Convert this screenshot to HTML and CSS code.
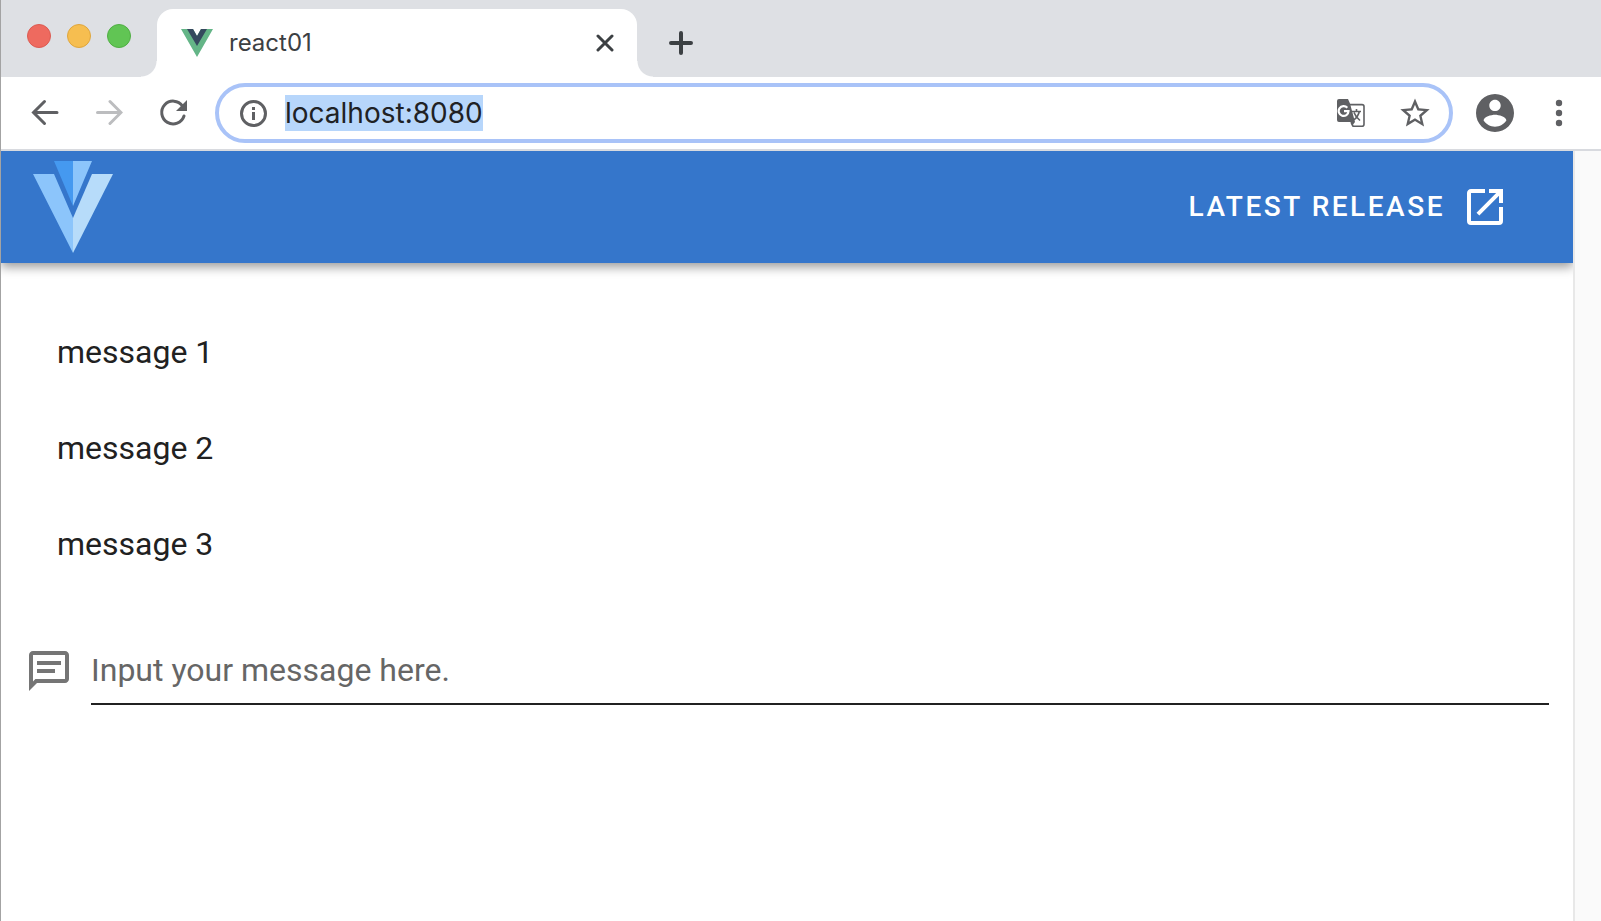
FILE: index.html
```html
<!DOCTYPE html>
<html lang="en">
<head>
<meta charset="utf-8">
<title>react01</title>
<link rel="stylesheet" href="styles.css">
</head>
<body>
<div class="window">
  <header class="tabstrip">
    <div class="lights">
      <button class="light light-red" aria-label="Close window"></button>
      <button class="light light-yellow" aria-label="Minimize window"></button>
      <button class="light light-green" aria-label="Zoom window"></button>
    </div>
    <div class="tab">
      <svg class="favicon" viewBox="0 0 32 28" aria-hidden="true"><path fill="#64b587" d="M0 0h12l4 7 4-7h12L16 28z"/><path fill="#35495e" d="M6 0h6l4 7 4-7h6L16 17z"/></svg>
      <span class="tab-title">react01</span>
      <button class="tab-close" aria-label="Close tab"><svg width="18" height="18" viewBox="0 0 18 18"><path class="line" d="M2 2l14 14M16 2L2 16"/></svg></button>
    </div>
    <button class="tab-new" aria-label="New tab"><svg width="24" height="24" viewBox="0 0 24 24"><path class="line line-bold" d="M12 2v20M2 12h20"/></svg></button>
  </header>

  <nav class="toolbar">
    <div class="nav-buttons">
      <button class="tool" aria-label="Back"><svg width="28" height="28" viewBox="0 0 28 28"><path class="line" d="M26 13.500H3M13.500 2.500l-11 11 11 11"/></svg></button>
      <button class="tool tool-off" aria-label="Forward"><svg width="28" height="28" viewBox="0 0 28 28"><path class="line" d="M2.500 13.500h23M15 2.500l11 11-11 11"/></svg></button>
      <button class="tool" aria-label="Reload"><svg width="28" height="28" viewBox="0 0 28 28"><path class="line" d="M23.500 7A11.400 11.400 0 1 0 25 17"/><path fill="currentColor" d="M28 1v11H17z"/></svg></button>
    </div>
    <div class="omnibox">
      <svg class="info" viewBox="0 0 28 28" aria-hidden="true"><circle cx="14.500" cy="14.500" r="12" fill="none" stroke="currentColor" stroke-width="3"/><path fill="currentColor" d="M13 8h3v3h-3zM13 13h3v8h-3z"/></svg>
      <input class="url" id="url" type="text" value="localhost:8080" aria-label="Address" spellcheck="false">
      <div class="omni-actions">
        <button class="tool" aria-label="Translate"><svg width="28" height="28" viewBox="0 0 28 28"><path fill="none" stroke="currentColor" stroke-width="1.600" d="M13 5.600h12a2 2 0 0 1 2 2v17.600a2 2 0 0 1-2 2H16l-2-4"/><path fill="currentColor" d="M2 0h9l2 4.500 5 18.500H2a2 2 0 0 1-2-2V2a2 2 0 0 1 2-2zM14 23h4l-3 4z"/><path fill="none" stroke="#fff" stroke-width="2.200" d="M10.300 8.800A4.900 4.900 0 1 0 11.500 12.200H7"/><path fill="none" stroke="currentColor" stroke-width="1.600" d="M15 12.500h9M19.500 10v2.500M22.300 12.500c-.8 4-3 6.500-5.500 8.500M17 13.500c1 3 3 5.500 6 8"/></svg></button>
        <button class="tool" aria-label="Bookmark"><svg width="32" height="32" viewBox="1.100 .900 21.800 21.800"><path fill="currentColor" d="M22 9.240l-7.190-.62L12 2 9.190 8.630 2 9.240l5.460 4.730L5.820 21 12 17.270 18.180 21l-1.630-7.030L22 9.240zM12 15.400l-3.760 2.270 1-4.280-3.320-2.880 4.380-.38L12 6.100l1.710 4.040 4.380.38-3.320 2.880 1 4.280L12 15.400z"/></svg></button>
      </div>
    </div>
    <div class="nav-buttons">
      <button class="tool" aria-label="Profile"><svg width="38" height="38" viewBox="2 2 20 20"><path fill="currentColor" d="M12 2C6.480 2 2 6.480 2 12s4.480 10 10 10 10-4.480 10-10S17.520 2 12 2zm0 3c1.660 0 3 1.340 3 3s-1.340 3-3 3-3-1.340-3-3 1.340-3 3-3zm0 14.200c-2.500 0-4.710-1.280-6-3.220.03-1.990 4-3.080 6-3.080 1.990 0 5.970 1.090 6 3.080-1.290 1.940-3.500 3.220-6 3.220z"/></svg></button>
      <button class="tool" aria-label="Menu"><svg width="8" height="28" viewBox="0 0 8 28" fill="currentColor"><circle cx="4" cy="4" r="3.200"/><circle cx="4" cy="14" r="3.200"/><circle cx="4" cy="24" r="3.200"/></svg></button>
    </div>
  </nav>

  <div class="viewport">
    <div class="page">
      <header class="appbar">
        <svg class="logo" viewBox="0 0 80 92" role="img" aria-label="Vuetify"><path fill="#4599f0" d="M21 0h19v45z"/><path fill="#8cc5fb" d="M40 0h19L40 45zM0 13h21l19 44v35z"/><path fill="#b7dcfa" d="M80 13H59L40 57v35z"/></svg>
        <a class="release" href="#">
          <span>Latest Release</span>
          <svg width="48" height="48" viewBox="0 0 24 24" aria-hidden="true"><path fill="currentColor" d="M14,3V5H17.590L7.760,14.830L9.170,16.240L19,6.410V10H21V3M19,19H5V5H12V3H5C3.890,3 3,3.900 3,5V19A2,2 0 0,0 5,21H19A2,2 0 0,0 21,19V12H19V19Z"/></svg>
        </a>
      </header>
      <main class="content">
        <ul class="messages">
          <li class="message">message 1</li>
          <li class="message">message 2</li>
          <li class="message">message 3</li>
        </ul>
        <div class="compose">
          <label class="compose-icon" for="message" aria-label="Message"><svg width="48" height="48" viewBox="0 0 24 24"><path fill="currentColor" d="M20 2H4C2.900 2 2 2.900 2 4V22L6 18H20C21.100 18 22 17.100 22 16V4C22 2.900 21.100 2 20 2M20 16H5.200L4 17.200V4H20V16M6 7H18V9H6V7M6 11H15V13H6V11Z"/></svg></label>
          <input class="compose-input" id="message" type="text" placeholder="Input your message here.">
        </div>
      </main>
    </div>
    <div class="gutter"></div>
  </div>
</div>
<script>
  const url = document.getElementById("url");
  url.focus();
  url.select();
</script>
</body>
</html>
```
FILE: styles.css
```css
* { box-sizing: border-box; }

body {
  margin: 0;
  background: #fff;
  font-family: Roboto, "Liberation Sans", sans-serif;
  color: #212121;
}

button {
  display: flex;
  align-items: center;
  justify-content: center;
  padding: 0;
  border: 0;
  background: none;
  color: inherit;
}

svg { display: block; flex: none; }

.line {
  fill: none;
  stroke: currentColor;
  stroke-width: 3;
  stroke-linecap: round;
}
.line-bold { stroke-width: 4; }

.window {
  display: flex;
  flex-direction: column;
  min-height: 100vh;
  border-left: 1px solid #a3a3a3;
}

/* Tab strip */
.tabstrip {
  display: flex;
  align-items: stretch;
  padding-top: 9px;
  background: #dee0e4;
  color: #3c4043;
}
.lights {
  display: flex;
  gap: 16px;
  width: 156px;
  padding: 15px 0 0 26px;
}
.light {
  width: 24px;
  height: 24px;
  border: 1px solid;
  border-radius: 50%;
}
.light-red { background: #ee6a5f; border-color: #dc5b52; }
.light-yellow { background: #f6be50; border-color: #dfa63d; }
.light-green { background: #61c554; border-color: #50ae43; }

.tab {
  position: relative;
  display: flex;
  align-items: center;
  width: 480px;
  height: 68px;
  padding: 0 16px 0 24px;
  border-radius: 16px 16px 0 0;
  background: #fff;
}
.tab::before,
.tab::after {
  content: "";
  position: absolute;
  bottom: 0;
  width: 16px;
  height: 16px;
}
.tab::before {
  right: 100%;
  background: radial-gradient(circle at 0 0, transparent 15px, #fff 16px);
}
.tab::after {
  left: 100%;
  background: radial-gradient(circle at 100% 0, transparent 15px, #fff 16px);
}
.favicon { width: 32px; height: 28px; }
.tab-title {
  flex: 1;
  padding-left: 16px;
  font: 24px/32px Inter, sans-serif;
}
.tab-close { width: 32px; height: 32px; }
.tab-new { width: 56px; margin-left: 16px; }

/* Toolbar */
.toolbar {
  display: flex;
  align-items: center;
  gap: 14px;
  padding: 6px 14px 6px 16px;
  border-bottom: 2px solid #d8dadf;
  color: #5f6063;
}
.nav-buttons,
.omni-actions {
  display: flex;
  gap: 8px;
}
.tool { width: 56px; height: 48px; }
.tool-off { color: #bcbdbf; }
.omnibox {
  display: flex;
  flex: 1;
  align-items: center;
  height: 60px;
  padding: 0 6px 0 20px;
  border: 4px solid #a9c3f8;
  border-radius: 30px;
}
.info { width: 28px; height: 28px; }
.url {
  flex: 1;
  min-width: 0;
  margin-left: 18px;
  padding: 0;
  border: 0;
  outline: 0;
  background: none;
  font: 28px/36px Inter, sans-serif;
  color: #202124;
}
.url::selection { background: #b7d6fb; color: #202124; }

/* Page */
.viewport { display: flex; flex: 1; }
.page { flex: 1; min-width: 0; }
.gutter {
  width: 28px;
  border-left: 2px solid #e8e8e8;
  background: #fafafa;
}
.appbar {
  display: flex;
  align-items: center;
  justify-content: space-between;
  height: 112px;
  padding: 0 64px 0 32px;
  background: #3576cb;
  box-shadow: 0 4px 10px rgba(0, 0, 0, .4);
  clip-path: inset(0 0 -32px 0);
}
.logo { width: 80px; height: 92px; }
.release {
  display: flex;
  align-items: center;
  gap: 16px;
  font-size: 28px;
  font-weight: 500;
  line-height: 36px;
  letter-spacing: .09em;
  text-transform: uppercase;
  text-decoration: none;
  color: #fff;
}
.content { padding: 41px 24px; }
.messages {
  margin: 0;
  padding: 0 32px;
  list-style: none;
}
.message {
  padding: 24px 0;
  font-size: 32px;
  line-height: 48px;
}
.compose {
  display: flex;
  align-items: center;
  gap: 18px;
  padding-top: 44px;
}
.compose-icon { color: #757575; }
.compose-input {
  flex: 1;
  min-width: 0;
  height: 69px;
  padding: 0;
  border: 0;
  border-bottom: 2px solid #212121;
  outline: 0;
  background: none;
  font: 32px/40px Roboto, sans-serif;
  color: #212121;
}
.compose-input::placeholder { color: #666; opacity: 1; }
```
